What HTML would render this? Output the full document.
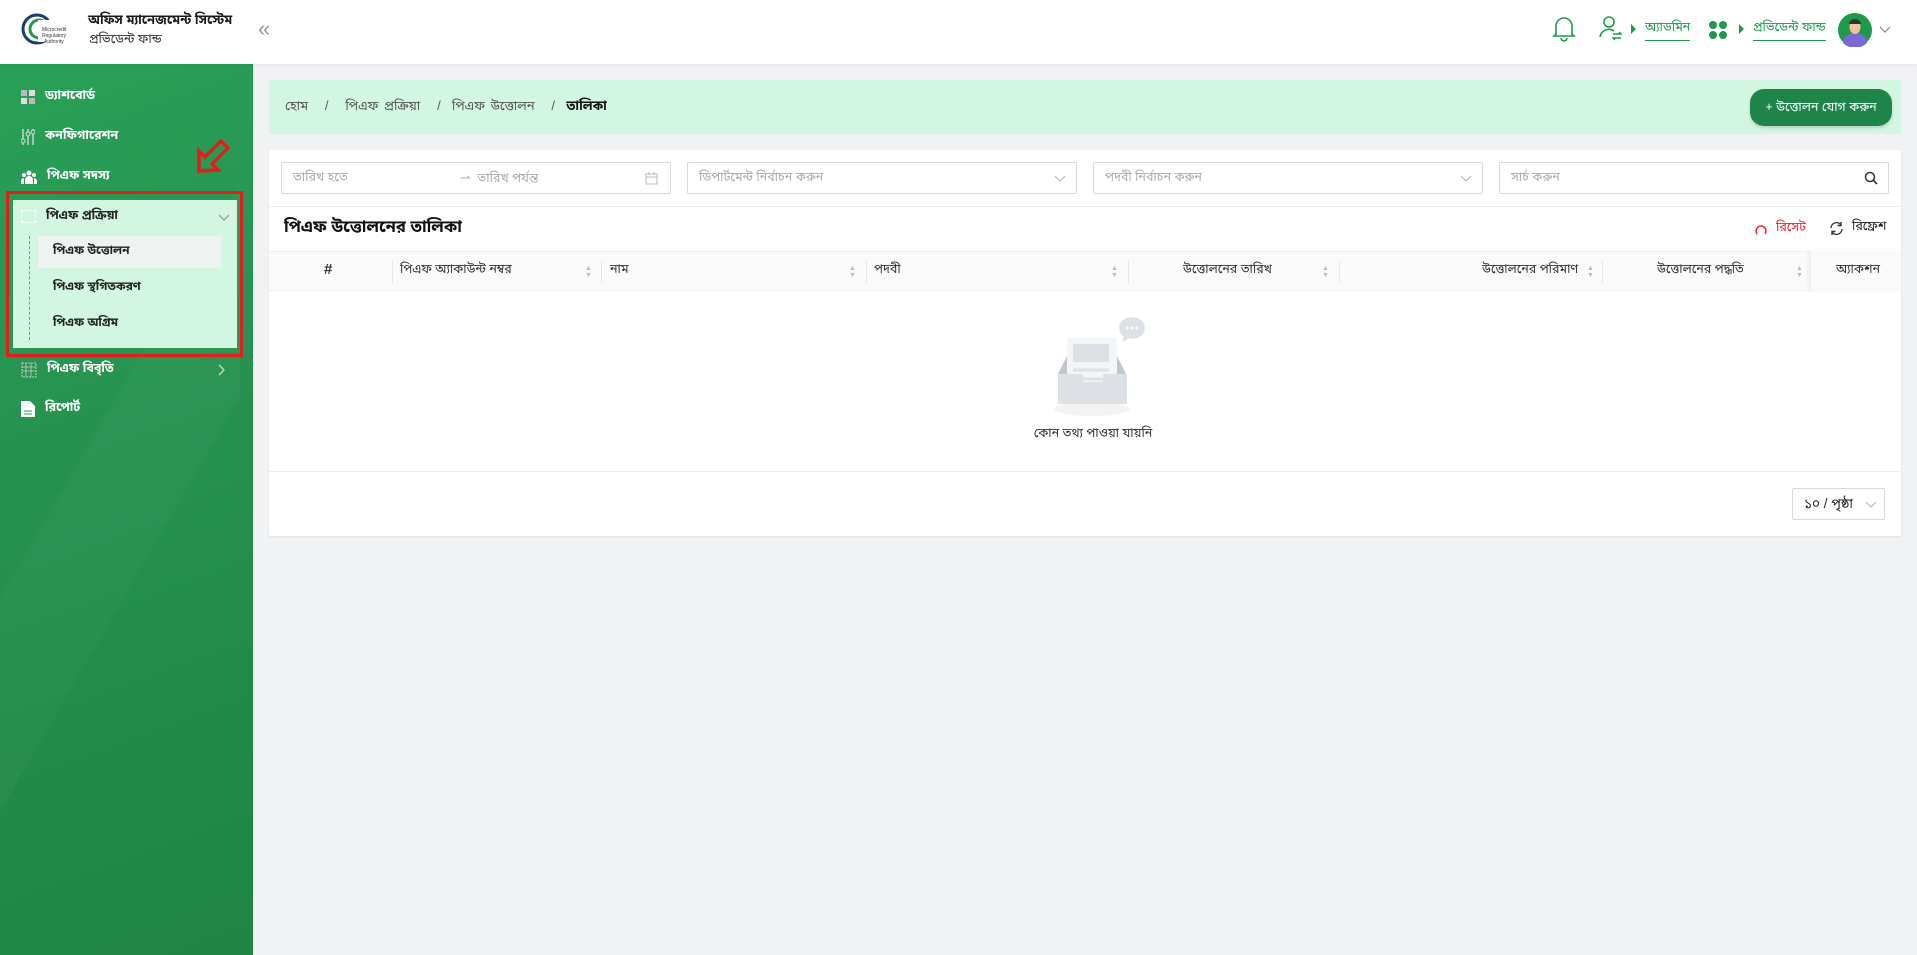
<!DOCTYPE html>
<html><head><meta charset="utf-8"><style>
*{box-sizing:border-box;margin:0;padding:0}
body{width:1917px;height:955px;overflow:hidden;background:#f1f2f4;font-family:"Liberation Sans","Noto Sans Bengali","Lohit Bengali",sans-serif;color:#222;position:relative}
.a{position:absolute}
.hdr{left:0;top:0;width:1917px;height:64px;background:#fff;box-shadow:0 1px 4px rgba(0,0,0,.06);z-index:2}
.side{left:0;top:64px;width:253px;height:891px;background:linear-gradient(160deg,#28a058 0%,#279250 40%,#1f8444 100%);overflow:hidden}
.mi{position:absolute;left:21px;font-size:12.5px;font-weight:bold;color:#fff;display:flex;align-items:center;gap:10px}
.ic{width:14px;height:14px;display:inline-block}
.card{background:#fff}
.inp{position:absolute;top:162px;height:32px;border:1px solid #d9d9d9;border-radius:2px;background:#fff;font-size:12.5px;color:#aaa;padding:7px 11px}
.th{position:absolute;top:253px;font-size:12.5px;color:#333}
.sep{position:absolute;top:261px;width:1px;height:22px;background:#e8e8e8}
.sort{position:absolute;top:265px;font-size:7px;color:#bbb;line-height:7px}
</style></head><body>
<div class="a hdr">
 <svg class="a" style="left:20px;top:12px" width="72" height="38" viewBox="0 0 72 38"><circle cx="17" cy="17" r="14" fill="none" stroke="#1a3c6e" stroke-width="3"/><circle cx="19" cy="17" r="9" fill="none" stroke="#1e9a4a" stroke-width="3"/><rect x="18" y="8" width="18" height="22" fill="#fff"/><text x="22" y="19" font-size="5" fill="#333">Microcredit</text><text x="22" y="25" font-size="5" fill="#333">Regulatory</text><text x="24" y="31" font-size="5" fill="#333">Authority</text></svg>
 <div class="a" style="left:88px;top:12px;font-size:13px;font-weight:bold;color:#1a1a1a">অফিস ম্যানেজমেন্ট সিস্টেম</div>
 <div class="a" style="left:89px;top:32px;font-size:12.5px;color:#333">প্রভিডেন্ট ফান্ড</div>
 <div class="a" style="left:258px;top:16px;font-size:22px;color:#999">«</div>
 <svg class="a" style="left:1551px;top:14px" width="26" height="28" viewBox="0 0 26 28"><path d="M5 20V12a8 8 0 0116 0v8l2 2H3z M10 24a3 3 0 006 0" fill="none" stroke="#1e9a4a" stroke-width="1.6"/></svg>
 <svg class="a" style="left:1598px;top:13px" width="26" height="28" viewBox="0 0 26 28"><circle cx="11" cy="9" r="5" fill="none" stroke="#1e9a4a" stroke-width="1.6"/><path d="M2 24a9 9 0 0114-6" fill="none" stroke="#1e9a4a" stroke-width="1.6"/><path d="M15 21h8l-2-2M23 25h-8l2 2" fill="none" stroke="#1e9a4a" stroke-width="1.4"/></svg>
 <div class="a" style="left:1631px;top:24px;width:0;height:0;border-left:5px solid #1e9a4a;border-top:5px solid transparent;border-bottom:5px solid transparent"></div>
 <div class="a" style="left:1645px;top:20px;font-size:12.5px;color:#1e9a4a;border-bottom:1.5px solid #1e9a4a;padding-bottom:3px">অ্যাডমিন</div>
 <svg class="a" style="left:1708px;top:20px" width="20" height="20"><circle cx="5" cy="5" r="4" fill="#1e9a4a"/><circle cx="15" cy="5" r="4" fill="#1e9a4a"/><circle cx="5" cy="15" r="4" fill="#1e9a4a"/><circle cx="15" cy="15" r="4" fill="#1e9a4a"/></svg>
 <div class="a" style="left:1739px;top:24px;width:0;height:0;border-left:5px solid #1e9a4a;border-top:5px solid transparent;border-bottom:5px solid transparent"></div>
 <div class="a" style="left:1753px;top:20px;font-size:12.5px;color:#1e9a4a;border-bottom:1.5px solid #1e9a4a;padding-bottom:3px">প্রভিডেন্ট ফান্ড</div>
 <svg class="a" style="left:1838px;top:13px" width="34" height="34" viewBox="0 0 34 34"><circle cx="17" cy="17" r="17" fill="#1e9a4a"/><path d="M5 30a12 10 0 0124 0A17 17 0 015 30z" fill="#7a6ad8"/><ellipse cx="17" cy="14" rx="5.5" ry="7" fill="#f0c3a0"/><path d="M11 11a6 5 0 0112 0" fill="#333"/></svg>
 <svg class="a" style="left:1879px;top:26px" width="12" height="8"><path d="M1 1l5 5 5-5" fill="none" stroke="#888" stroke-width="1.2"/></svg>
</div>

<div class="a side">
 <div class="a" style="left:-60px;top:0;width:300px;height:900px;background:linear-gradient(120deg,transparent 45%,rgba(255,255,255,.025) 45%,rgba(255,255,255,.025) 60%,transparent 60%)"></div>
 <div class="mi" style="top:24px"><svg class="ic" viewBox="0 0 14 14"><rect x="0" y="0" width="6" height="6" fill="#bbb"/><rect x="8" y="0" width="6" height="6" fill="#ddd"/><rect x="0" y="8" width="6" height="6" fill="#ddd"/><rect x="8" y="8" width="6" height="6" fill="#bbb"/></svg>ড্যাশবোর্ড</div>
 <div class="mi" style="top:64px"><svg class="ic" viewBox="0 0 14 16" style="height:16px"><path d="M2 0v16M7 0v16M12 0v16" stroke="#ddd" stroke-width="1.3"/><circle cx="2" cy="12" r="2" fill="#28a058" stroke="#ddd"/><circle cx="7" cy="5" r="2" fill="#28a058" stroke="#ddd"/><circle cx="12" cy="3" r="2" fill="#28a058" stroke="#ddd"/></svg>কনফিগারেশন</div>
 <div class="mi" style="top:104px"><svg class="ic" viewBox="0 0 16 14" style="width:16px"><circle cx="8" cy="3" r="2.5" fill="#fff"/><circle cx="3" cy="5" r="2" fill="#fff"/><circle cx="13" cy="5" r="2" fill="#fff"/><path d="M4 14v-4a4 4 0 018 0v4z M0 14v-3a3 3 0 013-3v6z M16 14v-3a3 3 0 00-3-3v6z" fill="#fff"/></svg>পিএফ সদস্য</div>
</div>
<svg class="a" style="left:193px;top:135px" width="40" height="40" viewBox="0 0 40 40"><path d="M6 36L6 16L12 22L28 6L35 13L19 29L25 35Z" fill="none" stroke="#e51c1c" stroke-width="3.5" stroke-linejoin="miter"/></svg>
<div class="a" style="left:6px;top:191px;width:237px;height:166px;border:3px solid #e51c1c"></div>
<div class="a" style="left:13px;top:200px;width:224px;height:148px;background:#d3f6e2"></div>
<div class="a" style="left:21px;top:208px;font-size:12.5px;font-weight:bold;color:#222;display:flex;gap:10px;align-items:center"><span style="width:15px;height:13px;border:1px dashed #fff;display:inline-block"></span>পিএফ প্রক্রিয়া</div>
<svg class="a" style="left:218px;top:214px" width="12" height="8"><path d="M1 1l5 5 5-5" fill="none" stroke="#999" stroke-width="1.3"/></svg>
<div class="a" style="left:29px;top:236px;height:104px;border-left:1px dashed #888"></div>
<div class="a" style="left:38px;top:236px;width:183px;height:32px;background:#eef2f0"></div>
<div class="a" style="left:53px;top:243px;font-size:12px;font-weight:bold;color:#222">পিএফ উত্তোলন</div>
<div class="a" style="left:53px;top:279px;font-size:12px;font-weight:bold;color:#222">পিএফ স্থগিতকরণ</div>
<div class="a" style="left:53px;top:315px;font-size:12px;font-weight:bold;color:#222">পিএফ অগ্রিম</div>
<div class="mi" style="top:361px"><svg class="ic" viewBox="0 0 16 16" style="width:16px;height:16px"><rect x="1" y="1" width="14" height="14" fill="none" stroke="#ccc" stroke-dasharray="2 1"/><path d="M1 5h14M1 9h14M5 1v14M10 1v14" stroke="#ccc" stroke-width=".8"/></svg>পিএফ বিবৃতি</div>
<svg class="a" style="left:218px;top:364px" width="8" height="12"><path d="M1 1l5 5-5 5" fill="none" stroke="#bfe0cc" stroke-width="1.3"/></svg>
<div class="mi" style="top:400px"><svg class="ic" viewBox="0 0 14 16" style="height:16px"><path d="M0 0h9l5 5v11H0z" fill="#fff"/><path d="M3 10h8M3 13h8" stroke="#28a058"/></svg>রিপোর্ট</div>

<div class="a" style="left:269px;top:80px;width:1632px;height:54px;background:#d3f6e2"></div>
<div class="a" style="left:285px;top:98px;font-size:13px;color:#555;word-spacing:2px">হোম &nbsp; / &nbsp; পিএফ প্রক্রিয়া &nbsp; / &nbsp;পিএফ উত্তোলন &nbsp; / &nbsp;<b style="color:#111">তালিকা</b></div>
<div class="a" style="left:1750px;top:89px;width:142px;height:37px;border-radius:14px;background:#1e8449;color:#fff;font-size:12.5px;text-align:center;line-height:37px;box-shadow:0 2px 3px rgba(0,0,0,.15)">+ উত্তোলন যোগ করুন</div>

<div class="a card" style="left:269px;top:150px;width:1632px;height:386px;box-shadow:0 1px 2px rgba(0,0,0,.08)"></div>
<div class="inp" style="left:281px;width:390px">তারিখ হতে<span class="a" style="left:178px;top:7px">⇀ &nbsp;তারিখ পর্যন্ত</span><svg class="a" style="left:363px;top:9px" width="13" height="13"><rect x="1" y="2" width="11" height="10" fill="none" stroke="#bbb"/><path d="M1 5h11M4 0v3M9 0v3" stroke="#bbb"/></svg></div>
<div class="inp" style="left:687px;width:390px">ডিপার্টমেন্ট নির্বাচন করুন<svg class="a" style="left:366px;top:12px" width="12" height="8"><path d="M1 1l5 5 5-5" fill="none" stroke="#bbb" stroke-width="1.2"/></svg></div>
<div class="inp" style="left:1093px;width:390px">পদবী নির্বাচন করুন<svg class="a" style="left:366px;top:12px" width="12" height="8"><path d="M1 1l5 5 5-5" fill="none" stroke="#bbb" stroke-width="1.2"/></svg></div>
<div class="inp" style="left:1499px;width:390px">সার্চ করুন<svg class="a" style="left:364px;top:8px" width="14" height="14"><circle cx="6" cy="6" r="4.5" fill="none" stroke="#333" stroke-width="1.5"/><path d="M9.5 9.5l3.5 3.5" stroke="#333" stroke-width="1.6"/></svg></div>
<div class="a" style="left:269px;top:206px;width:1632px;height:1px;background:#eee"></div>
<div class="a" style="left:284px;top:217px;font-size:16.5px;font-weight:bold;color:#111">পিএফ উত্তোলনের তালিকা</div>
<svg class="a" style="left:1754px;top:222px" width="14" height="14"><path d="M3 12A5 5 0 1111 12" fill="none" stroke="#f5222d" stroke-width="1.5"/></svg>
<div class="a" style="left:1776px;top:220px;font-size:12.5px;color:#f5222d">রিসেট</div>
<svg class="a" style="left:1829px;top:221px" width="15" height="15"><path d="M2 7a5.5 5.5 0 0110-3M13 8a5.5 5.5 0 01-10 3" fill="none" stroke="#333" stroke-width="1.4"/><path d="M12 1v3.5h-3.5M3 14v-3.5h3.5" fill="none" stroke="#333" stroke-width="1.4"/></svg>
<div class="a" style="left:1852px;top:219px;font-size:12.5px;color:#222">রিফ্রেশ</div>
<div class="a" style="left:269px;top:251px;width:1632px;height:40px;background:#fafafa;border-bottom:1px solid #eee;border-top:1px solid #f0f0f0"></div>
<div class="a" style="left:1811px;top:251px;width:90px;height:40px;background:#fafafa;box-shadow:-3px 0 4px rgba(0,0,0,.06)"></div>
<div class="th" style="left:324px;font-weight:bold;font-size:15px;top:261px">#</div>
<div class="sep" style="left:392px"></div><div class="th" style="left:400px;top:262px">পিএফ অ্যাকাউন্ট নম্বর</div><div class="sort" style="left:585px">▲<br>▼</div>
<div class="sep" style="left:601px"></div><div class="th" style="left:610px;top:262px">নাম</div><div class="sort" style="left:849px">▲<br>▼</div>
<div class="sep" style="left:866px"></div><div class="th" style="left:874px;top:262px">পদবী</div><div class="sort" style="left:1111px">▲<br>▼</div>
<div class="sep" style="left:1128px"></div><div class="th" style="left:1183px;top:262px">উত্তোলনের তারিখ</div><div class="sort" style="left:1322px">▲<br>▼</div>
<div class="sep" style="left:1339px"></div><div class="th" style="left:1482px;top:262px">উত্তোলনের পরিমাণ</div><div class="sort" style="left:1587px">▲<br>▼</div>
<div class="sep" style="left:1602px"></div><div class="th" style="left:1657px;top:262px">উত্তোলনের পদ্ধতি</div><div class="sort" style="left:1796px">▲<br>▼</div>
<div class="th" style="left:1836px;top:262px">অ্যাকশন</div>
<svg class="a" style="left:1040px;top:314px" width="110" height="104" viewBox="0 0 110 104"><ellipse cx="52" cy="95" rx="38" ry="7" fill="#f3f3f3"/><path d="M18 60L28 40h48l10 20z" fill="#bfc6cf"/><rect x="27" y="24" width="50" height="60" fill="#f4f5f7"/><rect x="33" y="30" width="36" height="18" fill="#dde1e6"/><path d="M33 56h36M33 65h36" stroke="#dde1e6" stroke-width="3"/><path d="M18 60h25v8h20v-8h24v30H18z" fill="#dde1e6"/><ellipse cx="92" cy="14" rx="13" ry="11" fill="#dde1e6"/><path d="M84 22l-2 6 7-4z" fill="#dde1e6"/><circle cx="87" cy="14" r="1.5" fill="#fff"/><circle cx="92" cy="14" r="1.5" fill="#fff"/><circle cx="97" cy="14" r="1.5" fill="#fff"/></svg>
<div class="a" style="left:1028px;top:426px;width:130px;text-align:center;font-size:12.5px;color:#333">কোন তথ্য পাওয়া যায়নি</div>
<div class="a" style="left:269px;top:471px;width:1632px;height:1px;background:#eee"></div>
<div class="a" style="left:1792px;top:488px;width:93px;height:32px;border:1px solid #d9d9d9;border-radius:2px;font-size:13.5px;color:#222;padding:7px 0 0 11px">১০ / পৃষ্ঠা<svg class="a" style="left:72px;top:12px" width="12" height="8"><path d="M1 1l5 5 5-5" fill="none" stroke="#bbb" stroke-width="1.2"/></svg></div>
</body></html>
